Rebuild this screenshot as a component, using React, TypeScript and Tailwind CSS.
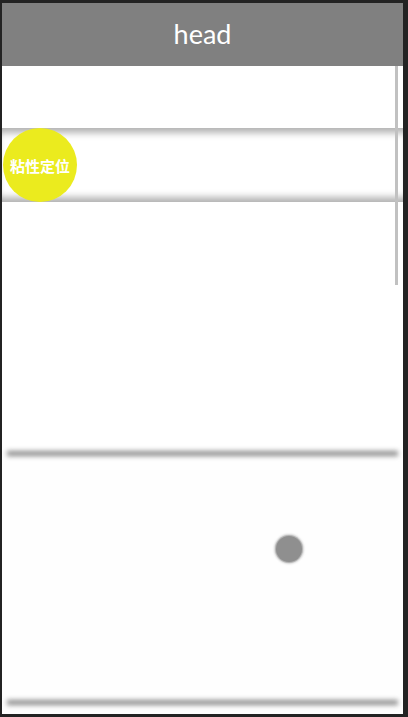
import React from 'react';

/**
 * Sticky positioning demo: grey head bar, a sticky band with a yellow badge,
 * blurred dividers and a floating dot.
 */
export default function App() {
    return (
        <div className="w-[408px] h-[717px] bg-[#232323] pt-[3px] pl-[2px] pr-[5px] pb-[3px]">
            <div className="relative flex flex-col h-full bg-white overflow-hidden">
                {/* Header */}
                <div className="h-[63px] shrink-0 bg-[#808080] flex items-center justify-center">
                    <span className="text-white text-[27px] leading-none pb-[2px]" style={{ fontFamily: 'Lato, "Noto Sans", sans-serif' }}>
                        head
                    </span>
                </div>

                {/* Blank row */}
                <div className="h-[62px] shrink-0 bg-white" />

                {/* Sticky band */}
                <div className="h-[74px] shrink-0 flex items-center bg-white shadow-[inset_0_10px_7px_-5px_rgba(0,0,0,0.3),inset_0_-10px_7px_-5px_rgba(0,0,0,0.3)]">
                    <div className="ml-[1px] w-[74px] h-[74px] rounded-full bg-[#ebeb1e] flex items-center justify-center">
                        <span
                            className="text-white text-[15px] font-bold leading-none"
                            style={{ fontFamily: '"Noto Sans CJK SC", "Noto Sans", sans-serif' }}
                        >
                            粘性定位
                        </span>
                    </div>
                </div>

                {/* Section with first divider */}
                <div className="h-[249px] shrink-0 bg-white" />
                <div className="h-[5px] shrink-0 mx-[5px] bg-[#8a8a8a] blur-[2.5px]" />

                {/* Section with dot */}
                <div className="h-[244px] shrink-0 bg-[#fefefe] pl-[274px] pt-[80px]">
                    <div className="w-[26px] h-[26px] rounded-full bg-[#8f8f8f] shadow-[0_0_0_1px_#b4b4b4,0_0_2px_2px_rgba(180,180,180,0.6)]" />
                </div>
                <div className="h-[5px] shrink-0 mx-[5px] bg-[#8a8a8a] blur-[2.5px]" />
                <div className="flex-1 bg-[#fefefe]" />

                {/* Scroll indicator */}
                <div className="absolute top-[63px] right-[5px] w-[3px] h-[219px] bg-[#c1c1c1]" />
            </div>
        </div>
    );
}
